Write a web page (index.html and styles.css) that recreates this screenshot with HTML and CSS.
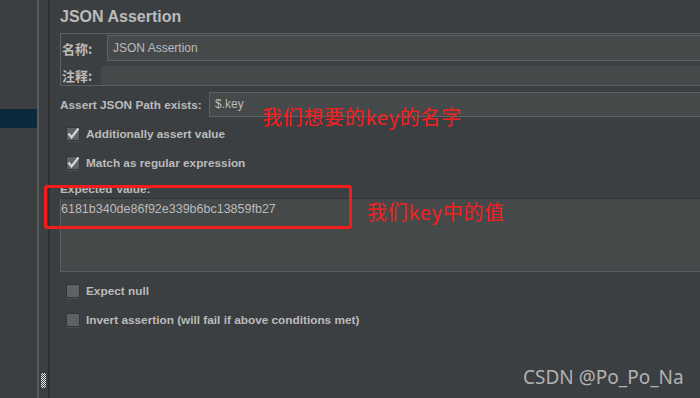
FILE: index.html
```html
<!DOCTYPE html>
<html lang="zh">

<head>
  <meta charset="UTF-8">
  <title>JSON Assertion</title>
  <link rel="stylesheet" href="styles.css">
</head>

<body>
  <div class="tree-panel">
    <div class="tree-row selected"></div>
  </div>

  <div class="splitter">
    <div class="grip"></div>
  </div>

  <div class="editor">
    <h1 class="editor-title">JSON Assertion</h1>

    <div class="name-panel">
      <div class="name-row">
        <label class="cn-label name-label">名称:</label>
        <div class="field field-name">JSON Assertion</div>
      </div>
      <div class="comment-row">
        <label class="cn-label comment-label">注释:</label>
        <div class="field field-comment"></div>
      </div>
    </div>

    <div class="path-row">
      <label class="path-label">Assert JSON Path exists:</label>
      <div class="field field-path">$.key</div>
    </div>

    <div class="check-row">
      <span class="checkbox checked">
        <svg viewBox="0 0 14 14" width="14" height="14"><path d="M2.5 6.5 L5.5 10.5 L12.5 1.5" fill="none" stroke="#d2d4d5" stroke-width="2.2"/></svg>
      </span>
      <span class="check-text">Additionally assert value</span>
    </div>
    <div class="check-row">
      <span class="checkbox checked">
        <svg viewBox="0 0 14 14" width="14" height="14"><path d="M2.5 6.5 L5.5 10.5 L12.5 1.5" fill="none" stroke="#d2d4d5" stroke-width="2.2"/></svg>
      </span>
      <span class="check-text">Match as regular expression</span>
    </div>

    <div class="value-label">Expected Value:</div>
    <div class="value-area">
      <span class="value-text">6181b340de86f92e339b6bc13859fb27</span>
    </div>

    <div class="check-row first-after-area">
      <span class="checkbox"></span>
      <span class="check-text">Expect null</span>
    </div>
    <div class="check-row">
      <span class="checkbox"></span>
      <span class="check-text">Invert assertion (will fail if above conditions met)</span>
    </div>
  </div>

  <!-- annotations drawn over the screenshot -->
  <div class="note-box"></div>
  <div class="note note-key">我们想要的key的名字</div>
  <div class="note note-value">我们key中的值</div>

  <div class="watermark">CSDN @Po_Po_Na</div>
</body>

</html>
```

FILE: styles.css
```css
* {
  margin: 0;
  padding: 0;
  box-sizing: border-box;
}

body {
  position: relative;
  display: flex;
  width: 700px;
  height: 398px;
  overflow: hidden;
  background-color: #3c3f41;
  font-family: "Liberation Sans", Arial, sans-serif;
  font-size: 12px;
  color: #bbbbbb;
}

.tree-panel {
  width: 37px;
  flex-shrink: 0;
}

.tree-row.selected {
  margin-top: 109px;
  height: 19px;
  background-color: #0d293e;
}

.splitter {
  width: 13px;
  flex-shrink: 0;
  display: flex;
  flex-direction: column;
  justify-content: flex-end;
  align-items: center;
  padding-bottom: 10px;
  border-left: 2px solid #57595b;
  border-right: 2px solid #2e3031;
}

.grip {
  width: 5px;
  height: 15px;
  background: repeating-conic-gradient(#e8e8e8 0 25%, #3c3f41 0 50%) 0 0 / 2px 2px;
}

.editor {
  flex: 1;
  padding-left: 10px;
  margin-right: -12px;
  min-width: 0;
}

.editor-title {
  margin-top: 7px;
  height: 20px;
  font-size: 16px;
  line-height: 20px;
  font-weight: bold;
}

.field {
  background-color: #45494a;
  border: 1px solid #5f6263;
  color: #bbbbbb;
  white-space: nowrap;
}

.name-panel {
  margin-top: 6px;
  padding-top: 1px;
  border: 1px solid #5e6163;
  border-right: none;
}

.cn-label {
  font-family: "Noto Sans CJK SC", "Liberation Sans", sans-serif;
  font-size: 13px;
  font-weight: bold;
  padding-left: 1px;
}

.name-row,
.comment-row {
  display: flex;
  align-items: center;
}

.name-label {
  width: 46px;
}

.field-name {
  flex: 1;
  height: 26px;
  line-height: 24px;
  padding-left: 5px;
}

.comment-row {
  margin-top: 5px;
}

.comment-label {
  width: 40px;
}

.field-comment {
  flex: 1;
  height: 19px;
  border: none;
}

.path-row {
  display: flex;
  align-items: center;
  margin-top: 6px;
}

.path-label {
  width: 149px;
  font-size: 11.8px;
  font-weight: bold;
}

.field-path {
  flex: 1;
  height: 25px;
  line-height: 23px;
  padding-left: 5px;
}

.check-row {
  display: flex;
  align-items: center;
  gap: 6px;
  height: 29px;
  padding-left: 6px;
}

.path-row + .check-row {
  margin-top: 2px;
}

.check-row.first-after-area {
  margin-top: 4px;
}

.checkbox {
  display: flex;
  flex-shrink: 0;
  width: 14px;
  height: 14px;
  background-color: #5f6264;
  border: 1px solid #333536;
  border-radius: 2px;
  box-shadow: 0 1px 0 #4b4e50;
  overflow: visible;
}

.checkbox svg {
  margin: -1px 0 0 -1px;
  overflow: visible;
}

.check-text {
  font-size: 11.8px;
  font-weight: bold;
}

.value-label {
  height: 21px;
  padding-top: 5px;
  line-height: 15px;
  font-size: 11.8px;
  font-weight: bold;
}

.value-area {
  display: flex;
  align-items: flex-start;
  height: 74px;
  padding: 2px 0 0 0;
  line-height: 16px;
  background-color: #45494a;
  border: 1px solid #5a5d5f;
  border-top-color: #2f3132;
}

.value-text {
  font-size: 12.5px;
  white-space: nowrap;
}

.note-box {
  position: absolute;
  left: 44px;
  top: 185px;
  width: 308px;
  height: 44px;
  border: 3px solid #f31c1c;
  border-radius: 3px;
}

.note {
  position: absolute;
  font-family: "Noto Sans CJK SC", sans-serif;
  font-size: 20px;
  line-height: 20px;
  letter-spacing: 0.7px;
  color: #f71e1e;
  white-space: nowrap;
}

.note-key {
  left: 262px;
  top: 107px;
}

.note-value {
  left: 367px;
  top: 202px;
}

.watermark {
  position: absolute;
  left: 523px;
  top: 368px;
  font-family: "Noto Sans", sans-serif;
  font-size: 19px;
  line-height: 19px;
  color: rgba(210, 210, 210, 0.8);
}
```
